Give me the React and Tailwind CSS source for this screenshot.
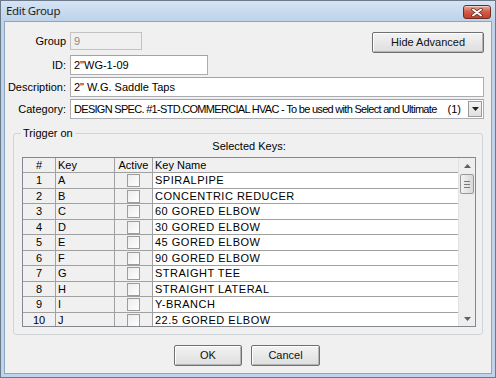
import React from "react";

const rows = [
  { n: 1, key: "A", name: "SPIRALPIPE" },
  { n: 2, key: "B", name: "CONCENTRIC REDUCER" },
  { n: 3, key: "C", name: "60 GORED ELBOW" },
  { n: 4, key: "D", name: "30 GORED ELBOW" },
  { n: 5, key: "E", name: "45 GORED ELBOW" },
  { n: 6, key: "F", name: "90 GORED ELBOW" },
  { n: 7, key: "G", name: "STRAIGHT TEE" },
  { n: 8, key: "H", name: "STRAIGHT LATERAL" },
  { n: 9, key: "I", name: "Y-BRANCH" },
  { n: 10, key: "J", name: "22.5 GORED ELBOW" },
];

function WinButton({ children, className = "" }) {
  return (
    <button
      className={`flex items-center justify-center border border-[#707070] rounded-[2px] bg-gradient-to-b from-[#f3f3f3] to-[#dedede] shadow-[inset_1px_1px_0_#ffffff,inset_-1px_-1px_0_#b4b4b4] text-[#111] ${className}`}
    >
      {children}
    </button>
  );
}

function Label({ children }) {
  return <div className="w-[61px] shrink-0 text-right leading-[20px]">{children}</div>;
}

export default function App() {
  return (
    <div className="w-[496px] h-[378px] flex flex-col bg-[#bfd3eb] border border-[#6b7a8b] font-['Liberation_Sans',Arial,sans-serif] text-[11px] text-[#000]">
      {/* Title bar */}
      <div className="h-[20px] shrink-0 flex items-center pl-[5px] pr-[4px] bg-gradient-to-b from-[#d6e4f4] to-[#bdd2ea]">
        <span className="text-[11.5px] font-['Noto_Sans',sans-serif] text-[#1e1e1e] tracking-[-0.35px]">Edit Group</span>
        <div className="ml-auto mt-[2px] w-[28px] h-[14px] rounded-[3px] border border-[#6e2d22] bg-gradient-to-b from-[#e9a797] via-[#d25a45] to-[#c4412c] flex items-center justify-center shadow-[inset_0_1px_0_rgba(255,255,255,0.5)]">
          <svg width="12" height="9" viewBox="0 0 12 9">
            <path d="M2 1.5 L10 7.5 M10 1.5 L2 7.5" stroke="#5a241c" strokeWidth="3.4" strokeLinecap="round" />
            <path d="M2 1.5 L10 7.5 M10 1.5 L2 7.5" stroke="#ffffff" strokeWidth="2" strokeLinecap="round" />
          </svg>
        </div>
      </div>

      {/* Client area */}
      <div className="flex-1 mx-[3px] mb-[3px] border border-[#8ea4bf] bg-[#f0f0f0] flex flex-col pt-[10px]">
        {/* Group row */}
        <div className="flex items-start gap-[4px] pr-[7px] h-[21px]">
          <div className="w-[61px] shrink-0 text-right leading-[19px]">Group</div>
          <div className="w-[72px] h-[18px] border border-[#c2c2c2] bg-[#f0f0f0] text-[#8a8a8a] pl-[3px] leading-[16px]">9</div>
          <WinButton className="ml-auto w-[112px] h-[21px]">Hide Advanced</WinButton>
        </div>

        {/* ID */}
        <div className="flex gap-[4px] mt-[2px]">
          <Label>ID:</Label>
          <div className="w-[138px] h-[20px] border border-[#abadb3] border-t-[#a0a3aa] bg-white pl-[3px] leading-[18px]">2"WG-1-09</div>
        </div>

        {/* Description */}
        <div className="flex gap-[4px] mt-[2px]">
          <Label>Description:</Label>
          <div className="w-[414px] h-[20px] border border-[#abadb3] border-t-[#a0a3aa] bg-white pl-[3px] leading-[18px]">2" W.G. Saddle Taps</div>
        </div>

        {/* Category */}
        <div className="flex gap-[4px] mt-[2px]">
          <Label>Category:</Label>
          <div className="w-[414px] h-[20px] border border-[#abadb3] border-t-[#a0a3aa] bg-white flex items-center pl-[3px] pr-[1px]">
            <span className="flex-1 whitespace-nowrap leading-[18px] tracking-[-0.7px]">
              DESIGN SPEC. #1-STD.COMMERCIAL HVAC - To be used with Select and Ultimate
            </span>
            <span className="pr-[7px] leading-[18px]">(1)</span>
            <div className="w-[14px] h-[16px] border border-[#9a9a9a] bg-gradient-to-b from-[#f4f4f4] to-[#e0e0e0] flex items-center justify-center">
              <svg width="7" height="4" viewBox="0 0 7 4">
                <path d="M0 0 H7 L3.5 4 Z" fill="#222" />
              </svg>
            </div>
          </div>
        </div>

        {/* Trigger on group box */}
        <div className="relative ml-[8px] mt-[14px] w-[470px] h-[202px] border border-[#d0d5da] rounded-[3px] flex flex-col pl-[8px] pt-[6px]">
          <span className="absolute left-[7px] -top-[7px] px-[2px] bg-[#f0f0f0] leading-[13px]">Trigger on</span>
          <div className="text-center leading-[13px] pr-[6px]">Selected Keys:</div>

          {/* Grid */}
          <div className="mt-[4px] w-[454px] h-[170px] border border-[#828790] flex bg-[#f0f0f0]">
            <div className="w-[435px] overflow-hidden flex flex-col">
              <div className="flex h-[15px] shrink-0 border-b border-[#a0a0a0] bg-[#f0f0f0] leading-[14px]">
                <div className="w-[33px] border-r border-[#a0a0a0] text-center">#</div>
                <div className="w-[59px] border-r border-[#a0a0a0] pl-[2px]">Key</div>
                <div className="w-[38px] border-r border-[#a0a0a0] text-center">Active</div>
                <div className="flex-1 pl-[2px]">Key Name</div>
              </div>
              {rows.map((r, i) => (
                <div
                  key={r.n}
                  className={`flex shrink-0 border-b border-[#a0a0a0] ${i % 2 ? "h-[15px]" : "h-[16px]"}`}
                >
                  <div className="w-[33px] border-r border-[#a0a0a0] text-center flex items-center justify-center">{r.n}</div>
                  <div className="w-[59px] border-r border-[#a0a0a0] pl-[2px] flex items-center">{r.key}</div>
                  <div className="w-[38px] border-r border-[#a0a0a0] flex items-center justify-center">
                    <div className="w-[13px] h-[13px] border border-[#9c9c9c] bg-gradient-to-br from-[#ececec] to-[#ffffff]"></div>
                  </div>
                  <div className="flex-1 bg-white pl-[2px] flex items-center tracking-[0.5px]">{r.name}</div>
                </div>
              ))}
            </div>

            {/* Scrollbar */}
            <div className="w-[17px] flex flex-col items-center bg-[#eeeeee] border-l border-[#e2e2e2]">
              <div className="h-[15px] flex items-center justify-center">
                <svg width="7" height="4" viewBox="0 0 7 4">
                  <path d="M0 4 H7 L3.5 0 Z" fill="#606060" />
                </svg>
              </div>
              <div className="w-[14px] h-[20px] mt-[1px] rounded-[2px] border border-[#979797] bg-gradient-to-r from-[#f2f2f2] to-[#d8d8d8] flex flex-col items-center justify-center gap-[2px]">
                <div className="w-[6px] h-px bg-[#7a7a7a]"></div>
                <div className="w-[6px] h-px bg-[#7a7a7a]"></div>
                <div className="w-[6px] h-px bg-[#7a7a7a]"></div>
              </div>
              <div className="mt-auto h-[15px] flex items-center justify-center">
                <svg width="7" height="4" viewBox="0 0 7 4">
                  <path d="M0 0 H7 L3.5 4 Z" fill="#606060" />
                </svg>
              </div>
            </div>
          </div>
        </div>

        {/* OK / Cancel */}
        <div className="flex justify-center gap-[9px] mt-[10px] pr-[2px]">
          <WinButton className="w-[68px] h-[21px]">OK</WinButton>
          <WinButton className="w-[69px] h-[21px]">Cancel</WinButton>
        </div>
      </div>
    </div>
  );
}
